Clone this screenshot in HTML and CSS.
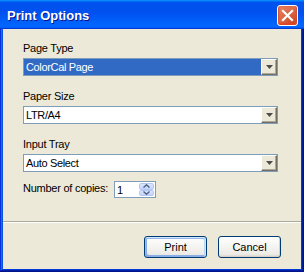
FILE: index.html
```html
<!DOCTYPE html>
<html>
<head>
    <title>Print Options</title>
    <meta name="viewport" content="width=device-width, initial-scale=1">
<link rel="stylesheet" href="styles.css">
</head>
<body>

  <div class="window">

    <div class="titlebar">
      <span class="title">Print Options</span>
      <button class="close" aria-label="Close">
        <svg width="13" height="13" viewBox="0 0 13 13">
          <path d="M2 2 L11 11 M11 2 L2 11" stroke="#fff" stroke-width="2.2" stroke-linecap="square"/>
        </svg>
      </button>
    </div>

    <div class="body">

      <div class="form">

        <div class="field">
          <label>Page Type</label>
          <div class="combo selected">
            <span class="value">ColorCal Page</span>
            <span class="drop"><svg width="7" height="4" viewBox="0 0 7 4"><polygon points="0,0 7,0 3.5,4" fill="#4d4d4d"/></svg></span>
          </div>
        </div>

        <div class="field">
          <label>Paper Size</label>
          <div class="combo">
            <span class="value">LTR/A4</span>
            <span class="drop"><svg width="7" height="4" viewBox="0 0 7 4"><polygon points="0,0 7,0 3.5,4" fill="#4d4d4d"/></svg></span>
          </div>
        </div>

        <div class="field last">
          <label>Input Tray</label>
          <div class="combo">
            <span class="value">Auto Select</span>
            <span class="drop"><svg width="7" height="4" viewBox="0 0 7 4"><polygon points="0,0 7,0 3.5,4" fill="#4d4d4d"/></svg></span>
          </div>
        </div>

        <div class="copies">
          <label>Number of copies:</label>
          <div class="spin">
            <span class="value">1</span>
            <span class="spinbtns">
              <span class="half"><svg width="7" height="4" viewBox="0 0 7 4"><path d="M0.5 3.5 L3.5 0.8 L6.5 3.5" fill="none" stroke="#4d6185" stroke-width="1.4"/></svg></span>
              <span class="half"><svg width="7" height="4" viewBox="0 0 7 4"><path d="M0.5 0.5 L3.5 3.2 L6.5 0.5" fill="none" stroke="#4d6185" stroke-width="1.4"/></svg></span>
            </span>
          </div>
        </div>

      </div>

      <div class="footer">
        <button class="btn default">Print</button>
        <button class="btn">Cancel</button>
      </div>

    </div>
  </div>

</body>
</html>
```

FILE: styles.css
```css
body {
  margin: 0;
  font-family: "Liberation Sans", Arial, sans-serif;
  font-size: 11px;
  background-color: #ece9d8;
}

.window {
  width: 304px;
  height: 272px;
  box-sizing: border-box;
  display: flex;
  flex-direction: column;
  padding: 0 3px 3px 3px;
  background-color: #0055ea;
  box-shadow: inset -1px -1px #00138c, inset 1px 1px #0831d9,
              inset -2px -2px #001ea0, inset 2px 2px #166aee,
              inset -3px -3px #003bda, inset 3px 3px #0855dd;
}

.titlebar {
  height: 29px;
  margin: 0 -3px;
  display: flex;
  align-items: center;
  justify-content: space-between;
  padding: 0 6px 0 7px;
  background: linear-gradient(180deg, #0997ff, #0053ee 8%, #0050ee 40%, #0066ff 88%, #0066ff 93%, #005bff 95%, #003dd7 96%, #003dd7);
}

.title {
  color: #fff;
  font-weight: bold;
  font-size: 13px;
  text-shadow: 1px 1px #0f1089;
  padding-top: 1px;
}

.close {
  width: 21px;
  height: 21px;
  padding: 0;
  margin-top: 2px;
  display: flex;
  align-items: center;
  justify-content: center;
  border: 1px solid #fff;
  border-radius: 3px;
  background: radial-gradient(circle at 80% 85%, #cc4626 0%, #dc6b4a 55%, #e88c6e 100%);
  box-shadow: inset 0 -1px 2px 1px #da4626;
}

.body {
  flex: 1;
  display: flex;
  flex-direction: column;
  background-color: #ece9d8;
}

.form {
  flex: 1;
  padding: 13px 23px 0 20px;
}

.field {
  margin-bottom: 14px;
}

.field.last {
  margin-bottom: 9px;
}

label {
  display: block;
  line-height: 13px;
  color: #000;
  letter-spacing: -0.25px;
}

.field label {
  margin-bottom: 3px;
}

.combo {
  height: 18px;
  box-sizing: border-box;
  border: 1px solid #7f9db9;
  background-color: #fff;
  display: flex;
  align-items: center;
  justify-content: space-between;
}

.combo .value {
  padding-left: 2px;
  letter-spacing: -0.35px;
}

.combo.selected {
  background-color: #316ac5;
  color: #fff;
}

.drop {
  width: 16px;
  height: 16px;
  box-sizing: border-box;
  display: flex;
  align-items: center;
  justify-content: center;
  background-color: #ece9d8;
  border-top: 1px solid #fff;
  border-left: 1px solid #fff;
  border-right: 1px solid #716f64;
  border-bottom: 1px solid #716f64;
  box-shadow: inset -1px -1px #aca899;
}

.copies {
  display: flex;
  align-items: center;
  gap: 6px;
}

.copies label {
  margin-top: -2px;
}

.spin {
  width: 42px;
  height: 17px;
  box-sizing: border-box;
  border: 1px solid #7f9db9;
  background-color: #fff;
  display: flex;
  align-items: center;
  justify-content: space-between;
  padding-right: 1px;
}

.spin .value {
  padding-left: 2px;
  padding-top: 1px;
}

.spinbtns {
  width: 15px;
  height: 13px;
  display: flex;
  flex-direction: column;
}

.half {
  flex: 1;
  display: flex;
  align-items: center;
  justify-content: center;
  background: linear-gradient(180deg, #dde6fc, #c1d2fb);
  border: 1px solid #b4c8f6;
  border-radius: 2px;
}

.footer {
  height: 48px;
  box-sizing: border-box;
  border-top: 1px solid #aca899;
  box-shadow: inset 0 1px #fff;
  display: flex;
  justify-content: flex-end;
  align-items: flex-start;
  gap: 11px;
  padding: 14px 20px 0 0;
}

.btn {
  width: 63px;
  height: 22px;
  padding: 0;
  font-family: "Liberation Sans", Arial, sans-serif;
  font-size: 11px;
  color: #000;
  border: 1px solid #003c74;
  border-radius: 3px;
  background: linear-gradient(180deg, #fff, #ecebe6 86%, #d6d0c5);
  box-shadow: inset -1px -1px #d6d0c5;
}

.btn.default {
  box-shadow: inset -1px 1px #cee7ff, inset 1px 2px #98b8ea,
              inset -2px 2px #bcd4f6, inset 1px -1px #89ade4,
              inset 2px -2px #89ade4;
}
```
